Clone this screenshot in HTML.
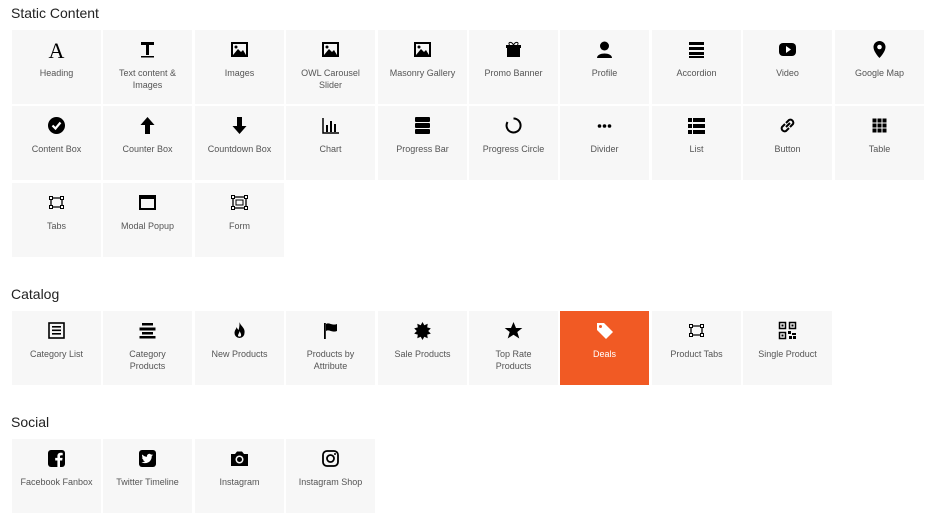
<!DOCTYPE html>
<html><head><meta charset="utf-8"><style>
body{margin:0;width:937px;height:521px;background:#fff;font-family:"Liberation Sans",Arial,sans-serif;position:relative;overflow:hidden}
h2{position:absolute;left:11px;margin:0;font-size:14px;font-weight:normal;color:#222}
.t{position:absolute;width:89px;height:74px;background:#f7f7f7;text-align:center;color:#555;font-size:9px;line-height:12px}
.t svg{position:absolute;left:35px;top:10px;width:19px;height:19px}
.t span{position:absolute;left:2px;right:2px;top:37px}
.d{background:#f15a24;color:#fff}
</style></head><body>
<h2 style="top:5px">Static Content</h2>
<h2 style="top:286px">Catalog</h2>
<h2 style="top:414px">Social</h2>
<div id="c"></div>
<script>
const I={
A:'<text x="9.5" y="18" font-size="22" text-anchor="middle" font-family="Liberation Serif">A</text>',
T:'<rect x="3" y="2" width="13" height="3"/><rect x="8" y="2" width="3" height="13"/><rect x="3" y="16" width="13" height="1.5"/>',
img:'<rect x="2" y="3" width="15" height="13" fill="none" stroke="#000" stroke-width="2"/><path d="M3 15l5-6 3 3 2-2 3 5z"/><circle cx="6" cy="7" r="1.5"/>',
gift:'<rect x="3" y="7" width="13" height="10"/><rect x="2" y="5" width="15" height="3"/><path d="M9.5 5c-2-4-6-3-4 0M9.5 5c2-4 6-3 4 0" fill="none" stroke="#000"/>',
user:'<circle cx="9.5" cy="6" r="4.5"/><path d="M2 18c0-6 15-6 15 0z"/>',
bars:'<rect x="2" y="2" width="15" height="3"/><rect x="2" y="7" width="15" height="3"/><rect x="2" y="12" width="15" height="3"/><rect x="2" y="16" width="15" height="2"/>',
yt:'<rect x="1" y="3" width="17" height="13" rx="4"/><path d="M8 6l5 3.5-5 3.5z" fill="#fff"/>',
pin:'<path d="M9.5 1a6 6 0 0 0-6 6c0 5 6 11 6 11s6-6 6-11a6 6 0 0 0-6-6z"/><circle cx="9.5" cy="7" r="2.3" fill="#fff"/>',
chk:'<circle cx="9.5" cy="9.5" r="8.5"/><path d="M5.5 9.5l3 3 5-6" stroke="#fff" stroke-width="2.2" fill="none"/>',
up:'<path d="M9.5 1l7 8h-4.5v9h-5v-9h-4.5z"/>',
down:'<path d="M9.5 18l7-8h-4.5v-9h-5v9h-4.5z"/>',
chart:'<path d="M2 2v15h16" stroke="#000" stroke-width="1.5" fill="none"/><rect x="5" y="9" width="2" height="7"/><rect x="9" y="5" width="2" height="11"/><rect x="13" y="8" width="2" height="8"/>',
prog:'<rect x="2" y="1" width="15" height="5" rx="1"/><rect x="2" y="7" width="15" height="5" rx="1"/><rect x="2" y="13" width="15" height="5" rx="1"/>',
circ:'<path d="M9.5 2.5a7 7 0 1 1-6 3.5" fill="none" stroke="#000" stroke-width="2"/>',
dots:'<circle cx="4.5" cy="10" r="1.8"/><circle cx="9.5" cy="10" r="1.8"/><circle cx="14.5" cy="10" r="1.8"/>',
list:'<rect x="1" y="2" width="4" height="4"/><rect x="6" y="2" width="12" height="4"/><rect x="1" y="8" width="4" height="4"/><rect x="6" y="8" width="12" height="4"/><rect x="1" y="14" width="4" height="4"/><rect x="6" y="14" width="12" height="4"/>',
link:'<path d="M8 11l4-4M7 8l-3 3a3 3 0 0 0 4 4l3-3M12 11l3-3a3 3 0 0 0-4-4l-3 3" stroke="#000" stroke-width="2" fill="none"/>',
grid:'<g>'+[2,7,12].map(x=>[2,7,12].map(y=>`<rect x="${x+.5}" y="${y+.5}" width="4" height="4"/>`).join('')).join('')+'</g>',
tabs:'<path d="M4 5h11v9h-11z" fill="none" stroke="#000" stroke-width="1.3"/><rect x="2.5" y="3.5" width="3" height="3" fill="#fff" stroke="#000"/><rect x="13.5" y="3.5" width="3" height="3" fill="#fff" stroke="#000"/><rect x="2.5" y="12.5" width="3" height="3" fill="#fff" stroke="#000"/><rect x="13.5" y="12.5" width="3" height="3" fill="#fff" stroke="#000"/>',
modal:'<rect x="2" y="3" width="15" height="13" fill="none" stroke="#000" stroke-width="2"/><rect x="2" y="3" width="15" height="3"/>',
form:'<rect x="3" y="4" width="13" height="11" fill="none" stroke="#000" stroke-width="1.3"/><rect x="6" y="7" width="7" height="5" fill="none" stroke="#000"/><rect x="1.5" y="2.5" width="3" height="3" fill="#fff" stroke="#000"/><rect x="14.5" y="2.5" width="3" height="3" fill="#fff" stroke="#000"/><rect x="1.5" y="13.5" width="3" height="3" fill="#fff" stroke="#000"/><rect x="14.5" y="13.5" width="3" height="3" fill="#fff" stroke="#000"/>',
cat:'<rect x="2" y="2" width="15" height="15" fill="none" stroke="#000" stroke-width="1.6"/><rect x="5" y="5" width="9" height="1.6"/><rect x="5" y="8.5" width="9" height="1.6"/><rect x="5" y="12" width="9" height="1.6"/>',
catp:'<rect x="4" y="2" width="11" height="2.5"/><rect x="1.5" y="6.5" width="16" height="3"/><rect x="4" y="11" width="11" height="2.5"/><rect x="1.5" y="15" width="16" height="2.5"/>',
fire:'<path d="M9.5 1c1 4 6 6 5 11a5 5 0 0 1-10 0c0-3 2-4 2-6 1 2 2 3 2 3 1-3 1-5 1-8z"/><path d="M9.5 10c1 2 2 3 1.5 5a2 2 0 0 1-3 0c0-2 1.5-3 1.5-5z" fill="#f7f7f7"/>',
flag:'<rect x="3" y="2" width="1.8" height="16"/><path d="M5 3c3-2 6 2 11 0v7c-5 2-8-2-11 0z"/>',
burst:'<path d="M9.5 1l1.8 3.2 3.4-1.4-.5 3.6 3.6 1-2.6 2.6 2.6 2.6-3.6 1 .5 3.6-3.4-1.4-1.8 3.2-1.8-3.2-3.4 1.4.5-3.6-3.6-1 2.6-2.6-2.6-2.6 3.6-1-.5-3.6 3.4 1.4z"/>',
star:'<path d="M9.5 1l2.5 6h6.3l-5 4 2 6.5-5.8-3.8-5.8 3.8 2-6.5-5-4h6.3z"/>',
tag:'<path d="M2 2h7l9 9-7 7-9-9z" fill="#fff"/><circle cx="5.5" cy="5.5" r="1.5" fill="#f15a24"/>',
qr:'<rect x="1.5" y="1.5" width="6" height="6" fill="none" stroke="#000" stroke-width="1.5"/><rect x="11.5" y="1.5" width="6" height="6" fill="none" stroke="#000" stroke-width="1.5"/><rect x="1.5" y="11.5" width="6" height="6" fill="none" stroke="#000" stroke-width="1.5"/><rect x="3.5" y="3.5" width="2" height="2"/><rect x="13.5" y="3.5" width="2" height="2"/><rect x="3.5" y="13.5" width="2" height="2"/><rect x="10" y="10" width="3" height="3"/><rect x="14" y="12" width="4" height="2"/><rect x="11" y="15" width="3" height="3"/><rect x="15" y="15" width="3" height="3"/>',
fb:'<rect x="1" y="1" width="17" height="17" rx="3"/><path d="M13 18v-6.5h2.2l.4-2.6H13V7.5c0-.8.3-1.3 1.4-1.3h1.3V3.9c-.3 0-1.1-.1-2-.1-2 0-3.3 1.2-3.3 3.4v1.7H8.2v2.6h2.2V18z" fill="#fff"/>',
tw:'<rect x="1" y="1" width="17" height="17" rx="3"/><path d="M15 6c-.5.2-1 .4-1.4.4.5-.3.9-.8 1-1.3-.5.3-1 .5-1.5.6a2.3 2.3 0 0 0-4 2.1C7 7.7 5.4 6.8 4.3 5.5c-.6 1 -.3 2.3.7 3-.4 0-.8-.1-1.1-.3 0 1.1.8 2 1.9 2.3-.4.1-.7.1-1 0 .3.9 1.2 1.6 2.2 1.6-1 .8-2.3 1.2-3.5 1 1 .7 2.3 1 3.6 1 4.3 0 6.8-3.6 6.6-6.9.5-.3.9-.8 1.3-1.2z" fill="#fff"/>',
cam:'<path d="M1 5h4l2-2.5h5L14 5h4v12H1z"/><circle cx="9.5" cy="10.5" r="4" fill="#f7f7f7"/><circle cx="9.5" cy="10.5" r="2.5"/>',
ig:'<rect x="2" y="2" width="15" height="15" rx="4" fill="none" stroke="#000" stroke-width="1.8"/><circle cx="9.5" cy="9.5" r="3.5" fill="none" stroke="#000" stroke-width="1.8"/><circle cx="14" cy="5" r="1"/>'
};
const rows=[
[30,[['A','Heading'],['T','Text content &amp;<br>Images'],['img','Images'],['img','OWL Carousel<br>Slider'],['img','Masonry Gallery'],['gift','Promo Banner'],['user','Profile'],['bars','Accordion'],['yt','Video'],['pin','Google Map']]],
[106,[['chk','Content Box'],['up','Counter Box'],['down','Countdown Box'],['chart','Chart'],['prog','Progress Bar'],['circ','Progress Circle'],['dots','Divider'],['list','List'],['link','Button'],['grid','Table']]],
[183,[['tabs','Tabs'],['modal','Modal Popup'],['form','Form']]],
[311,[['cat','Category List'],['catp','Category<br>Products'],['fire','New Products'],['flag','Products by<br>Attribute'],['burst','Sale Products'],['star','Top Rate<br>Products'],['tag','Deals'],['tabs','Product Tabs'],['qr','Single Product']]],
[439,[['fb','Facebook Fanbox'],['tw','Twitter Timeline'],['cam','Instagram'],['ig','Instagram Shop']]]
];
let h='';
rows.forEach(([y,items])=>items.forEach(([ic,lb],i)=>{
 const d=lb==='Deals';
 h+=`<div class="t${d?' d':''}" style="left:${Math.round(12+i*91.4)}px;top:${y}px"><svg viewBox="0 0 19 19">${I[ic]}</svg><span>${lb}</span></div>`;
}));
document.getElementById('c').innerHTML=h;
</script>
</body></html>
